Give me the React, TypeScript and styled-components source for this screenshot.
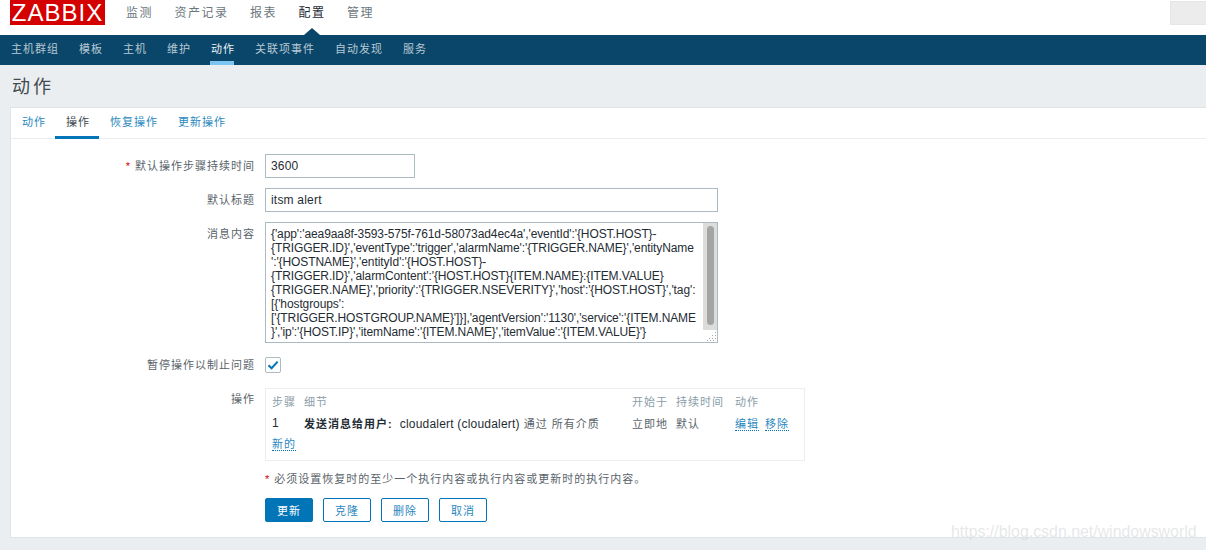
import React from "react";
import styled, { createGlobalStyle } from "styled-components";

const cjk = `"Liberation Sans", "Noto Sans CJK SC", sans-serif`;

const Global = createGlobalStyle`
  html, body { margin: 0; padding: 0; background: #ebeef0; }
  body { font-family: ${cjk}; color: #1f2c33; width: 1206px; height: 550px; overflow: hidden; }
  * { box-sizing: border-box; }
`;

const Page = styled.div`
  position: relative;
  width: 1206px;
  height: 550px;
  overflow: hidden;
  display: flex;
  flex-direction: column;
`;

const Header = styled.header`
  height: 35px;
  background: #fff;
  display: flex;
  align-items: flex-start;
  padding-left: 10px;
`;

const Logo = styled.div`
  width: 95px;
  height: 25px;
  padding-top: 1px;
  background: #d40000;
  color: #fff;
  font-size: 24px;
  line-height: 24px;
  letter-spacing: 1px;
  text-align: center;
  white-space: nowrap;
`;

const MainNav = styled.nav`
  display: flex;
  gap: 21.5px;
  margin-left: 21px;
  height: 35px;
  padding-top: 5px;
`;

const MainItem = styled.span<{ $active?: boolean }>`
  position: relative;
  height: 30px;
  font-size: 12px;
  line-height: 16px;
  letter-spacing: 1.5px;
  color: ${(p) => (p.$active ? "#1f2c33" : "#6b777e")};
  ${(p) =>
    p.$active &&
    `&::after {
      content: "";
      position: absolute;
      left: 5px;
      bottom: 0;
      border-left: 8px solid transparent;
      border-right: 8px solid transparent;
      border-bottom: 7px solid #0a466a;
    }`}
`;

const SearchStub = styled.div`
  margin-left: auto;
  margin-top: 1px;
  width: 36px;
  height: 24px;
  background: #ececec;
  border: 1px solid #e6e6e6;
  border-right: 0;
`;

const SubNav = styled.nav`
  height: 30px;
  background: #0a466a;
  display: flex;
  gap: 20px;
  padding-left: 11px;
`;

const SubItem = styled.span<{ $active?: boolean }>`
  position: relative;
  font-size: 11px;
  line-height: 29px;
  letter-spacing: 1px;
  color: ${(p) => (p.$active ? "#eef3f6" : "#b9c9d3")};
  ${(p) =>
    p.$active &&
    `&::after {
      content: "";
      position: absolute;
      left: -1px;
      right: 1px;
      bottom: 0;
      height: 4px;
      background: #7cc5f3;
    }`}
`;

const Title = styled.h1`
  margin: 0;
  height: 42px;
  padding: 9px 0 0 12px;
  font-size: 18px;
  line-height: 27px;
  font-weight: 400;
  letter-spacing: 3px;
  color: #414b51;
`;

const Panel = styled.section`
  margin-left: 10px;
  margin-right: -4px;
  height: 431px;
  background: #fff;
  border: 1px solid #dfe4e7;
`;

const Tabs = styled.div`
  height: 31px;
  border-bottom: 1px solid #ebeef0;
  display: flex;
`;

const Tab = styled.span<{ $active?: boolean }>`
  height: 31px;
  padding: 0 9px 0 11px;
  font-size: 11px;
  line-height: 29px;
  letter-spacing: 1px;
  color: ${(p) => (p.$active ? "#3d484e" : "#2a88c0")};
  border-bottom: 3px solid ${(p) => (p.$active ? "#0275b8" : "transparent")};
`;

const Form = styled.div`
  padding-top: 15px;
  display: flex;
  flex-direction: column;
`;

const Row = styled.div<{ $top?: number }>`
  display: grid;
  grid-template-columns: 244px 1fr;
  column-gap: 10px;
  margin-top: ${(p) => p.$top ?? 0}px;
`;

const Label = styled.div<{ $pad?: number }>`
  text-align: right;
  font-size: 11px;
  line-height: 14px;
  letter-spacing: 1px;
  color: #596369;
  padding-top: ${(p) => p.$pad ?? 5}px;
  white-space: nowrap;
`;

const Star = styled.span`
  color: #d40000;
  margin-right: 4px;
`;

const Field = styled.input<{ $w: number }>`
  display: block;
  width: ${(p) => p.$w}px;
  height: 24px;
  border: 1px solid #acbbc2;
  background: #fff;
  padding: 0 5px;
  font: 12px "Liberation Sans", sans-serif;
  letter-spacing: 0.2px;
  color: #1f2c33;
  outline: none;
`;

const AreaWrap = styled.div`
  position: relative;
  width: 453px;
  height: 121px;
`;

const Area = styled.textarea`
  display: block;
  width: 453px;
  height: 121px;
  border: 1px solid #acbbc2;
  background: #fff;
  padding: 4px 5px 0 5px;
  font: 12px/14px "Liberation Sans", sans-serif;
  letter-spacing: -0.1px;
  color: #1f2c33;
  outline: none;
  resize: none;
  overflow: hidden;
  white-space: pre;
`;

const ScrollTrack = styled.div`
  position: absolute;
  top: 1px;
  right: 1px;
  width: 14px;
  height: 107px;
  background: #dcdcdc;
  padding: 3px 3px 0 4px;
`;

const ScrollThumb = styled.div`
  height: 99px;
  background: #a4a4a4;
  border-radius: 4px;
`;

const Grip = styled.svg`
  position: absolute;
  right: 1px;
  bottom: 1px;
`;

const CheckBox = styled.span`
  display: flex;
  align-items: center;
  justify-content: center;
  width: 16px;
  height: 16px;
  border: 1px solid #acbbc2;
  border-radius: 2px;
  color: #0275b8;
`;

const OpsBox = styled.div`
  width: 540px;
  height: 73px;
  border: 1px solid #ebeef0;
  padding: 1px 6px 0;
`;

const OpsTable = styled.table`
  border-collapse: collapse;
  table-layout: fixed;
  width: 527px;
  font-size: 11px;
  letter-spacing: 1px;
`;

const Th = styled.th<{ $w?: number }>`
  width: ${(p) => (p.$w ? `${p.$w}px` : "auto")};
  height: 21px;
  padding: 0;
  text-align: left;
  font-weight: 400;
  color: #8a9da8;
`;

const Td = styled.td`
  height: 23px;
  padding: 0;
  color: #596369;
  white-space: nowrap;
`;

const Latin = styled.span`
  font-size: 12px;
  letter-spacing: 0.2px;
  color: #1f2c33;
`;

const Strong = styled.strong`
  font-weight: 700;
  color: #1f2c33;
  margin-right: 3px;
`;

const Link = styled.a`
  color: #2a88c0;
  border-bottom: 1px dotted #0275b8;
  & + & { margin-left: 6px; }
`;

const NewCell = styled.td`
  height: 19px;
  padding: 0 0 2px;
`;

const Note = styled.div`
  margin-top: 11px;
  font-size: 11px;
  line-height: 14px;
  letter-spacing: 1px;
  color: #596369;
`;

const Actions = styled.div`
  display: flex;
  gap: 10px;
  margin-top: 12px;
`;

const Btn = styled.button<{ $primary?: boolean }>`
  width: 48px;
  height: 24px;
  padding: 0;
  border: 1px solid #0275b8;
  border-radius: 2px;
  background: ${(p) => (p.$primary ? "#0275b8" : "#fff")};
  color: ${(p) => (p.$primary ? "#fff" : "#2a88c0")};
  font: 11px ${cjk};
  letter-spacing: 1px;
`;

const Watermark = styled.div`
  position: absolute;
  left: 951px;
  top: 521px;
  font-size: 15.9px;
  line-height: 22px;
  color: rgba(205, 208, 210, 0.5);
  white-space: nowrap;
`;

const message = `{'app':'aea9aa8f-3593-575f-761d-58073ad4ec4a','eventId':'{HOST.HOST}-
{TRIGGER.ID}','eventType':'trigger','alarmName':'{TRIGGER.NAME}','entityName
':'{HOSTNAME}','entityId':'{HOST.HOST}-
{TRIGGER.ID}','alarmContent':'{HOST.HOST}{ITEM.NAME}:{ITEM.VALUE}
{TRIGGER.NAME}','priority':'{TRIGGER.NSEVERITY}','host':'{HOST.HOST}','tag':
[{'hostgroups':
['{TRIGGER.HOSTGROUP.NAME}']}],'agentVersion':'1130','service':'{ITEM.NAME
}','ip':'{HOST.IP}','itemName':'{ITEM.NAME}','itemValue':'{ITEM.VALUE}'}`;

export default function App() {
  return (
    <Page>
      <Global />
      <Header>
        <Logo>ZABBIX</Logo>
        <MainNav>
          <MainItem>监测</MainItem>
          <MainItem>资产记录</MainItem>
          <MainItem>报表</MainItem>
          <MainItem $active>配置</MainItem>
          <MainItem>管理</MainItem>
        </MainNav>
        <SearchStub />
      </Header>
      <SubNav>
        <SubItem>主机群组</SubItem>
        <SubItem>模板</SubItem>
        <SubItem>主机</SubItem>
        <SubItem>维护</SubItem>
        <SubItem $active>动作</SubItem>
        <SubItem>关联项事件</SubItem>
        <SubItem>自动发现</SubItem>
        <SubItem>服务</SubItem>
      </SubNav>
      <Title>动作</Title>
      <Panel>
        <Tabs>
          <Tab>动作</Tab>
          <Tab $active>操作</Tab>
          <Tab>恢复操作</Tab>
          <Tab>更新操作</Tab>
        </Tabs>
        <Form>
          <Row>
            <Label><Star>*</Star>默认操作步骤持续时间</Label>
            <Field $w={150} defaultValue="3600" />
          </Row>
          <Row $top={10}>
            <Label>默认标题</Label>
            <Field $w={453} defaultValue="itsm alert" />
          </Row>
          <Row $top={10}>
            <Label>消息内容</Label>
            <AreaWrap>
              <Area readOnly defaultValue={message} />
              <ScrollTrack><ScrollThumb /></ScrollTrack>
              <Grip width="11" height="11" viewBox="0 0 11 11" fill="#a9a9a9">
                <rect x="9" y="1" width="1" height="1" />
                <rect x="6" y="4" width="1" height="1" />
                <rect x="9" y="4" width="1" height="1" />
                <rect x="3" y="7" width="1" height="1" />
                <rect x="6" y="7" width="1" height="1" />
                <rect x="9" y="7" width="1" height="1" />
                <rect x="1" y="9" width="1" height="1" />
                <rect x="4" y="9" width="1" height="1" />
                <rect x="7" y="9" width="1" height="1" />
              </Grip>
            </AreaWrap>
          </Row>
          <Row $top={14}>
            <Label $pad={1}>暂停操作以制止问题</Label>
            <CheckBox>
              <svg width="12" height="12" viewBox="0 0 12 12" fill="none">
                <path d="M1.5 6.2 4.6 9.2 10.6 2.6" stroke="currentColor" strokeWidth="2" />
              </svg>
            </CheckBox>
          </Row>
          <Row $top={15}>
            <Label $pad={4}>操作</Label>
            <div>
              <OpsBox>
                <OpsTable>
                  <thead>
                    <tr>
                      <Th $w={32}>步骤</Th>
                      <Th $w={328}>细节</Th>
                      <Th $w={44}>开始于</Th>
                      <Th $w={59}>持续时间</Th>
                      <Th>动作</Th>
                    </tr>
                  </thead>
                  <tbody>
                    <tr>
                      <Td><Latin>1</Latin></Td>
                      <Td>
                        <Strong>发送消息给用户:</Strong> <Latin>cloudalert (cloudalert)</Latin> 通过 所有介质
                      </Td>
                      <Td>立即地</Td>
                      <Td>默认</Td>
                      <Td><Link>编辑</Link><Link>移除</Link></Td>
                    </tr>
                    <tr>
                      <NewCell colSpan={5}><Link>新的</Link></NewCell>
                    </tr>
                  </tbody>
                </OpsTable>
              </OpsBox>
              <Note><Star>*</Star>必须设置恢复时的至少一个执行内容或执行内容或更新时的执行内容。</Note>
              <Actions>
                <Btn $primary>更新</Btn>
                <Btn>克隆</Btn>
                <Btn>删除</Btn>
                <Btn>取消</Btn>
              </Actions>
            </div>
          </Row>
        </Form>
      </Panel>
      <Watermark>https://blog.csdn.net/windowsworld</Watermark>
    </Page>
  );
}
